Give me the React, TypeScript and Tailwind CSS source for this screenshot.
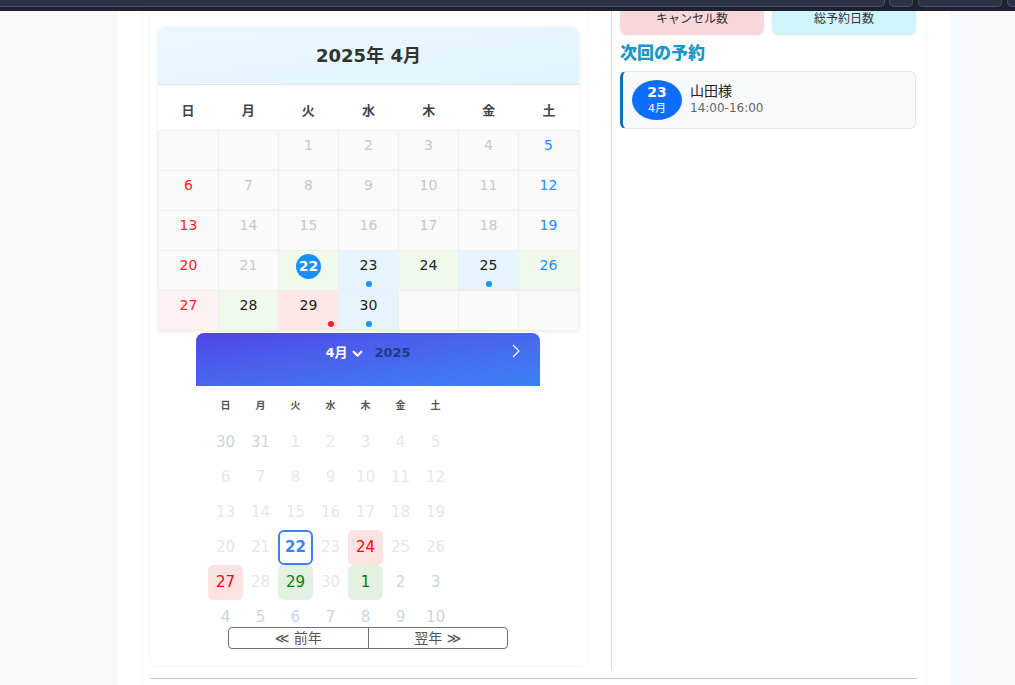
import React from "react";

type Cell = { d: number | null; bg: string; color: string; mark?: "today" | "dot" | "red" };

const FONT = { fontFamily: '"DejaVu Sans", "Noto Sans CJK JP", sans-serif' };

const WEEK = ["日", "月", "火", "水", "木", "金", "土"];

function monthCells(): Cell[] {
  const days: (number | null)[] = [null, null];
  for (let i = 1; i <= 30; i++) days.push(i);
  while (days.length < 35) days.push(null);
  return days.map((d, i) => {
    const col = i % 7;
    if (d === null) return { d, bg: "bg-[#fafafa]", color: "" };
    if (d < 22) {
      const color = col === 0 ? "text-[#f5222d]" : col === 6 ? "text-[#1890ff]" : "text-[#c8c8c8]";
      return { d, bg: "bg-[#fafafa]", color };
    }
    switch (d) {
      case 22:
        return { d, bg: "bg-[#f0f9eb]", color: "text-white", mark: "today" };
      case 23:
      case 25:
      case 30:
        return { d, bg: "bg-[#e6f4ff]", color: "text-[#222]", mark: "dot" };
      case 26:
        return { d, bg: "bg-[#f0f9eb]", color: "text-[#1890ff]" };
      case 27:
        return { d, bg: "bg-[#fff2f2]", color: "text-[#f5222d]" };
      case 29:
        return { d, bg: "bg-[#ffe7e7]", color: "text-[#222]", mark: "red" };
      default:
        return { d, bg: "bg-[#f0f9eb]", color: "text-[#222]" };
    }
  });
}

type PickDay = { d: number; cls: string };

function pickerDays(): PickDay[] {
  const out: PickDay[] = [];
  const muted = "text-[#cbd5e1]";
  const faint = "text-[#e5e7eb]";
  out.push({ d: 30, cls: muted }, { d: 31, cls: muted });
  for (let i = 1; i <= 30; i++) {
    let cls = faint;
    if (i === 22) cls = "text-[#3b82f6] font-bold border-2 border-[#3b82f6] rounded-[6px]";
    if (i === 24 || i === 27) cls = "text-[#ff0000] bg-[#fee2e2] rounded-[6px]";
    if (i === 29) cls = "text-[#008000] bg-[#e3f1e3] rounded-[6px]";
    out.push({ d: i, cls });
  }
  out.push({ d: 1, cls: "text-[#008000] bg-[#e3f1e3] rounded-[6px]" });
  for (let i = 2; i <= 10; i++) out.push({ d: i, cls: muted });
  return out;
}

function TopBar() {
  return (
    <div className="h-[11px] shrink-0 bg-[#1f2232] flex">
      <div className="h-[7px] w-[885px] bg-[#2d3249] border-b border-r border-[#4a4f67] rounded-br-[5px]" />
      <div className="h-[7px] w-[24px] ml-[4px] bg-[#2d3249] border-b border-x border-[#4a4f67] rounded-b-[5px]" />
      <div className="h-[7px] w-[84px] ml-[5px] bg-[#2d3249] border-b border-x border-[#4a4f67] rounded-b-[5px]" />
      <div className="h-[7px] flex-1 ml-[5px] bg-[#2d3249] border-b border-l border-[#4a4f67] rounded-bl-[5px]" />
    </div>
  );
}

function MonthCalendar() {
  const cells = monthCells();
  return (
    <div className="ml-[8px] w-[421px] rounded-t-[8px] bg-white shadow-[0_1px_4px_rgba(0,0,0,0.08)]">
      <div className="h-[58px] rounded-t-[8px] bg-gradient-to-br from-[#ecf8ff] to-[#e2f4fd] border-b border-[#dfe3e6] flex items-center justify-center">
        <span className="text-[18px] font-bold text-[#333]">2025年 4月</span>
      </div>
      <div className="grid grid-cols-7 h-[45px] items-center">
        {WEEK.map((w) => (
          <div key={w} className="text-center text-[13px] font-semibold text-[#444] pt-[7px]">
            {w}
          </div>
        ))}
      </div>
      <div className="grid grid-cols-7 border-t border-l border-[#eee]">
        {cells.map((c, i) => (
          <div key={i} className={`relative h-[40px] border-r border-b border-[#eee] flex justify-center ${c.bg}`}>
            {c.mark === "today" ? (
              <span className="mt-[3px] w-[25px] h-[25px] rounded-full bg-[#1890ff] text-white text-[14px] font-bold flex items-center justify-center">
                {c.d}
              </span>
            ) : (
              c.d !== null && <span className={`pt-[4px] text-[14px] leading-[20px] ${c.color}`}>{c.d}</span>
            )}
            {c.mark === "dot" && (
              <span className="absolute bottom-[3px] left-1/2 -translate-x-1/2 w-[6px] h-[6px] rounded-full bg-[#1890ff]" />
            )}
            {c.mark === "red" && (
              <span className="absolute bottom-[3px] right-[4px] w-[6px] h-[6px] rounded-full bg-[#f5222d]" />
            )}
          </div>
        ))}
      </div>
    </div>
  );
}

function DatePicker() {
  const days = pickerDays();
  return (
    <div className="mt-[2px] ml-[46px] w-[344px]">
      <div className="h-[53px] rounded-t-[8px] bg-gradient-to-br from-[#4f46e5] to-[#3b82f6] relative">
        <div className="pt-[11px] flex items-center justify-center gap-[10px] leading-[18px] text-[13px]">
          <span className="flex items-center gap-[4px] text-white font-bold">
            4月
            <svg width="13" height="13" viewBox="0 0 24 24" fill="none" stroke="white" strokeWidth="4" strokeLinecap="round" strokeLinejoin="round">
              <path d="M5 9l7 7 7-7" />
            </svg>
          </span>
          <span className="text-[#1e3a8a] font-semibold">2025</span>
        </div>
        <svg className="absolute right-[18px] top-[10px]" width="12" height="16" viewBox="0 0 12 16" fill="none" stroke="white" strokeWidth="1.2">
          <path d="M3 2l6 6-6 6" />
        </svg>
      </div>
      <div className="pl-[12px]">
        <div className="grid grid-cols-[repeat(7,35px)] h-[38px] items-center">
          {WEEK.map((w) => (
            <div key={w} className="text-center text-[10px] font-bold text-[#555]">
              {w}
            </div>
          ))}
        </div>
        <div className="grid grid-cols-[repeat(7,35px)] auto-rows-[35px] pt-[1px]">
          {days.map((p, i) => (
            <div key={i} className={`flex items-center justify-center text-[15px] ${p.cls}`}>
              {p.d}
            </div>
          ))}
        </div>
      </div>
      <div className="-mt-[8px] ml-[32px] w-[280px] h-[22px] flex border border-[#6b7280] rounded-[4px] text-[14px] text-[#555]">
        <button className="flex-1 flex items-center justify-center gap-[4px] leading-none">≪ 前年</button>
        <button className="flex-1 flex items-center justify-center gap-[4px] leading-none border-l border-[#6b7280]">翌年 ≫</button>
      </div>
    </div>
  );
}

function RightColumn() {
  return (
    <div className="w-[296px] ml-[8px]">
      <div className="flex gap-[8px]">
        <div className="flex-1 h-[24px] rounded-b-[7px] bg-[#f8d7da] shadow-[0_1px_3px_rgba(0,0,0,0.06)] flex justify-center text-[12px] text-[#333] leading-[16px]">
          キャンセル数
        </div>
        <div className="flex-1 h-[24px] rounded-b-[7px] bg-[#cff4fc] shadow-[0_1px_3px_rgba(0,0,0,0.06)] flex justify-center text-[12px] text-[#333] leading-[16px]">
          総予約日数
        </div>
      </div>
      <h2 className="mt-[6px] text-[17px] leading-[24px] font-extrabold text-[#1a97c6]">次回の予約</h2>
      <div className="mt-[6px] h-[58px] rounded-[6px] bg-[#f8f9fa] border border-[#e3e6ea] border-l-[3px] border-l-[#0a70b8] flex items-center pl-[9px]">
        <div className="w-[50px] h-[40px] rounded-[50%] bg-[#0d6efd] text-white flex flex-col items-center justify-center">
          <span className="text-[14px] font-bold leading-[17px]">23</span>
          <span className="text-[11px] leading-[15px]">4月</span>
        </div>
        <div className="ml-[8px] -mt-[2px]">
          <div className="text-[14px] text-[#222] leading-[18px]">山田様</div>
          <div className="text-[12px] text-[#666] leading-[16px]">14:00-16:00</div>
        </div>
      </div>
    </div>
  );
}

export default function App() {
  return (
    <div className="h-[685px] overflow-hidden bg-[#f8f9fb] flex flex-col" style={FONT}>
      <TopBar />
      <div className="flex-1 flex">
        <main className="ml-[118px] w-[832px] bg-white pl-[25px]">
          <div className="w-[782px] h-full px-[7px] shadow-[0_0_5px_rgba(0,0,0,0.05)]">
            <div className="flex h-[659px]">
              <section className="w-[437px] h-[654px] pt-[16px] bg-white rounded-b-[6px] shadow-[0_1px_4px_rgba(0,0,0,0.05)]">
                <MonthCalendar />
                <DatePicker />
              </section>
              <div className="ml-[24px] w-px bg-[#dcdcdc]" />
              <RightColumn />
            </div>
            <div className="mt-[8px] w-[767px] h-px bg-[#c4c4c4]" />
          </div>
        </main>
      </div>
    </div>
  );
}
